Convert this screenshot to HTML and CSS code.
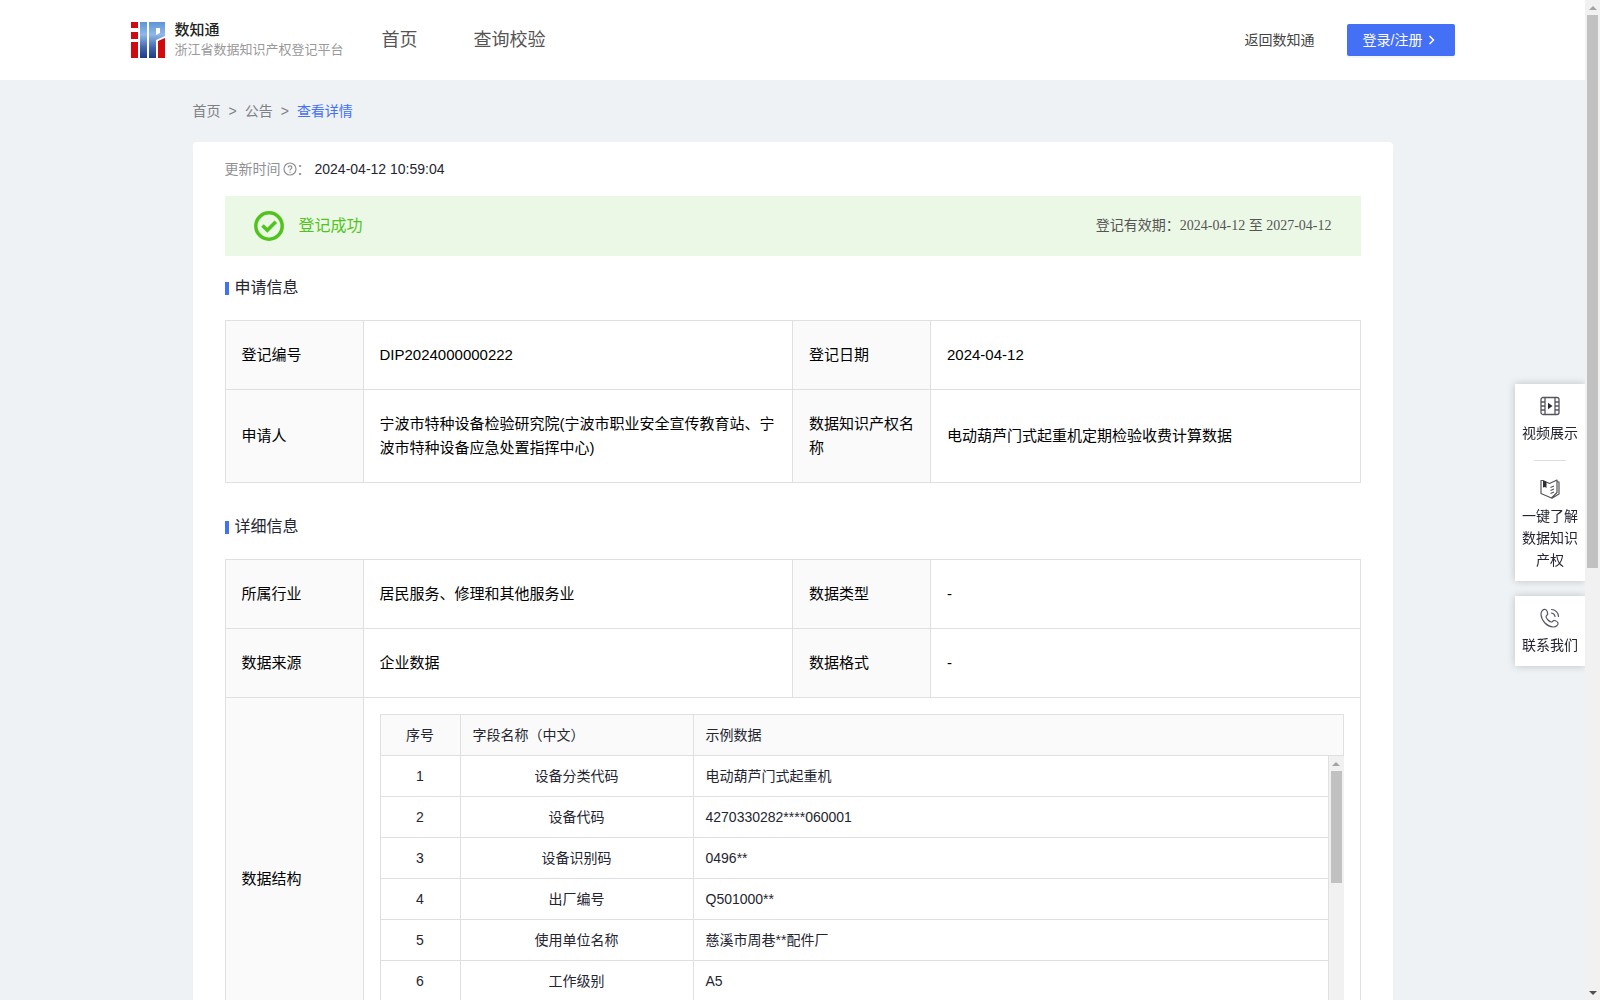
FILE: index.html
```html
<!DOCTYPE html>
<html lang="zh-CN">
<head>
<meta charset="utf-8">
<meta name="viewport" content="width=device-width, initial-scale=1">
<title>查看详情 - 浙江省数据知识产权登记平台</title>
<link rel="stylesheet" href="styles.css">
</head>
<body>
<div class="viewport">
<header class="header">
  <div class="header-inner">
    <a class="brand" href="#">
      <svg class="brand-logo" viewBox="0 0 34 36" aria-hidden="true">
        <defs>
          <linearGradient id="blue" x1="0" y1="0" x2="0" y2="36" gradientUnits="userSpaceOnUse">
            <stop offset="0" stop-color="#5d94d6"/>
            <stop offset="0.35" stop-color="#8fb8e8"/>
            <stop offset="0.7" stop-color="#4468b0"/>
            <stop offset="1" stop-color="#1f3a86"/>
          </linearGradient>
        </defs>
        <path fill="#cf0a10" d="M0 0h7v6H0zM0 10h7v7H0zM0 20h7v16H0zM27 19l7-3v20h-7z"/>
        <path fill="url(#blue)" d="M9 0h7v36H9zM18 0h16v14l-9 4v18h-7zM25 6v7l4-2V6z" fill-rule="evenodd"/>
      </svg>
      <span class="brand-text">
        <strong class="brand-name">数知通</strong>
        <span class="brand-sub">浙江省数据知识产权登记平台</span>
      </span>
    </a>
    <nav class="nav">
      <a href="#">首页</a>
      <a href="#">查询校验</a>
    </nav>
    <div class="header-actions">
      <a class="back-link" href="#">返回数知通</a>
      <button class="login" type="button">登录/注册<svg viewBox="0 0 14 14" aria-hidden="true"><path d="M4.500 3l4 4-4 4" fill="none" stroke="currentColor" stroke-width="1.5"/></svg></button>
    </div>
  </div>
</header>

<main class="page">
  <nav class="breadcrumb" aria-label="breadcrumb">
    <a href="#">首页</a><span>&gt;</span><a href="#">公告</a><span>&gt;</span><a class="current" href="#">查看详情</a>
  </nav>

  <section class="card">
    <div class="updated">
      <span class="updated-label">更新时间</span>
      <svg class="help" viewBox="0 0 14 14" aria-hidden="true"><g fill="none" stroke="#909094" stroke-width="1.2"><circle cx="7" cy="7" r="6"/><path d="M5.2 5.6c0-2.2 3.6-2.2 3.6 0C8.8 6.900 7 6.900 7 8.400"/></g><circle cx="7" cy="10.200" r=".7" fill="#909094"/></svg>
      <span class="updated-label">：</span>
      <time>2024-04-12 10:59:04</time>
    </div>

    <div class="banner">
      <svg class="banner-icon" viewBox="0 0 30 30" aria-hidden="true"><g fill="none" stroke="#50c41c"><circle cx="15" cy="15" r="13.200" stroke-width="3.500"/><path d="M8.500 14.500l4.800 4.800 8.500-8.500" stroke-width="3.600"/></g></svg>
      <span class="banner-status">登记成功</span>
      <span class="banner-term">登记有效期：2024-04-12 至 2027-04-12</span>
    </div>

    <h2 class="section-title">申请信息</h2>
    <table class="info">
      <colgroup><col class="c-label"><col><col class="c-label"><col></colgroup>
      <tbody>
        <tr><th scope="row">登记编号</th><td>DIP2024000000222</td><th scope="row">登记日期</th><td>2024-04-12</td></tr>
        <tr><th scope="row">申请人</th><td>宁波市特种设备检验研究院(宁波市职业安全宣传教育站、宁波市特种设备应急处置指挥中心)</td><th scope="row">数据知识产权名称</th><td>电动葫芦门式起重机定期检验收费计算数据</td></tr>
      </tbody>
    </table>

    <h2 class="section-title">详细信息</h2>
    <table class="info">
      <colgroup><col class="c-label"><col><col class="c-label"><col></colgroup>
      <tbody>
        <tr><th scope="row">所属行业</th><td>居民服务、修理和其他服务业</td><th scope="row">数据类型</th><td>-</td></tr>
        <tr><th scope="row">数据来源</th><td>企业数据</td><th scope="row">数据格式</th><td>-</td></tr>
        <tr>
          <th scope="row">数据结构</th>
          <td class="nest" colspan="3">
            <table class="fields fields-head">
              <colgroup><col class="c-no"><col class="c-name"><col></colgroup>
              <thead><tr><th scope="col">序号</th><th scope="col">字段名称（中文）</th><th scope="col">示例数据</th></tr></thead>
            </table>
            <div class="fields-scroll">
              <table class="fields">
                <colgroup><col class="c-no"><col class="c-name"><col></colgroup>
                <tbody>
                  <tr><td>1</td><td>设备分类代码</td><td>电动葫芦门式起重机</td></tr>
                  <tr><td>2</td><td>设备代码</td><td>4270330282****060001</td></tr>
                  <tr><td>3</td><td>设备识别码</td><td>0496**</td></tr>
                  <tr><td>4</td><td>出厂编号</td><td>Q501000**</td></tr>
                  <tr><td>5</td><td>使用单位名称</td><td>慈溪市周巷**配件厂</td></tr>
                  <tr><td>6</td><td>工作级别</td><td>A5</td></tr>
                  <tr><td></td><td></td><td></td></tr>
                </tbody>
              </table>
              <div class="scrollbar" aria-hidden="true">
                <span class="arrow arrow-up"></span>
                <span class="track"><span class="thumb thumb-fields"></span></span>
                <span class="arrow arrow-down"></span>
              </div>
            </div>
          </td>
        </tr>
      </tbody>
    </table>
  </section>
</main>
</div>

<aside class="side">
  <div class="side-group">
    <a class="side-item" href="#">
      <svg viewBox="0 0 20 20" aria-hidden="true"><g fill="none" stroke="#55555e" stroke-width="1.300"><rect x="1" y="1.500" width="18" height="17" rx="2"/><path d="M5 1.500v17M15 1.500v17M1 6h4M1 10h4M1 14h4M15 6h4M15 10h4M15 14h4"/></g><path d="M8 6.800v6.400l4.500-3.200z" fill="#2c2c36"/></svg>
      <span>视频展示</span>
    </a>
    <hr class="side-rule">
    <a class="side-item" href="#">
      <svg viewBox="0 0 20 20" aria-hidden="true"><g fill="none" stroke="#55555e" stroke-width="1.200" stroke-linejoin="round"><path d="M3 1.500L9.500 4.500 17 1v12.500l-5.500 5.500L1 14.500v-13h2M17 2.500l2 .5v12l-7.500 4.500M10.500 8.500L14 7M10.500 11.500L14 10M10.500 14.500L14 13"/></g><path d="M3 1.500l3.500 1.500v6L5 8l-2 .5z" fill="#2c2c36"/></svg>
      <span>一键了解数据知识产权</span>
    </a>
  </div>
  <div class="side-group">
    <a class="side-item" href="#">
      <svg viewBox="0 0 20 20" aria-hidden="true"><g fill="none" stroke="#55555e" stroke-width="1.200" stroke-linejoin="round" stroke-linecap="round"><path d="M5.500 1.500C3 .8.8 3.500 1 6.500 1.500 13 7 18.500 13 19c3 .2 5.500-2 5-4-.2-1-2.500-2.300-3.500-2.500-1.500-.3-2 1.500-3 1.500-2 0-5.500-3.500-5.500-5.500 0-1 2-1.500 1.700-3C7.500 4.300 6.500 1.800 5.500 1.500z"/><path d="M11.500 5a4 4 0 0 1 3.500 3.500M11.500 1.500a7 7 0 0 1 7 7"/></g></svg>
      <span>联系我们</span>
    </a>
  </div>
</aside>

<div class="scrollbar page-scrollbar" aria-hidden="true">
  <span class="arrow arrow-up"></span>
  <span class="track"><span class="thumb thumb-page"></span></span>
  <span class="arrow arrow-down arrow-active"></span>
</div>
</body>
</html>
```

FILE: styles.css
```css
* {
  box-sizing: border-box;
}

body {
  display: flex;
  height: 100vh;
  margin: 0;
  overflow: hidden;
  background: #eef2f5;
  color: #252531;
  font: 14px/22px "Liberation Sans", "Noto Sans CJK SC", sans-serif;
}

.viewport {
  flex: 1;
  min-width: 0;
  overflow-y: auto;
}

a {
  color: inherit;
  text-decoration: none;
}

svg {
  display: block;
  flex: none;
}

/* Scrollbars */
.scrollbar {
  display: flex;
  flex: none;
  flex-direction: column;
  width: 15px;
  background: #f1f1f1;
}

.page-scrollbar {
  z-index: 2;
}

.track {
  flex: 1;
  padding: 0 2px;
}

.thumb {
  display: block;
  background: #c1c1c1;
}

.thumb-page {
  height: 57%;
}

.thumb-fields {
  height: 112px;
}

.arrow {
  display: flex;
  align-items: center;
  justify-content: center;
  height: 15px;
  color: #a3a3a3;
}

.arrow::before {
  border: 4px solid transparent;
  content: "";
}

.arrow-up::before {
  border-top: 0;
  border-bottom-color: currentColor;
}

.arrow-down::before {
  border-bottom: 0;
  border-top-color: currentColor;
}

.arrow-active {
  color: #505050;
}

/* Header */
.header {
  background: #fff;
}

.header-inner {
  display: flex;
  align-items: center;
  max-width: 1324px;
  height: 80px;
  margin: 0 auto;
}

.brand {
  display: flex;
  align-items: center;
  gap: 10px;
}

.brand-logo {
  width: 34px;
  height: 36px;
}

.brand-text {
  display: flex;
  flex-direction: column;
}

.brand-name {
  color: #222;
  font-size: 15px;
  font-weight: 500;
  line-height: 20px;
}

.brand-sub {
  color: #999;
  font-size: 13px;
  line-height: 20px;
}

.nav {
  display: flex;
  gap: 56px;
  margin-left: 38px;
  color: #555;
  font-size: 18px;
}

.header-actions {
  display: flex;
  align-items: center;
  gap: 32px;
  margin-left: auto;
}

.back-link {
  color: #444;
}

.login {
  display: flex;
  align-items: center;
  gap: 2px;
  height: 32px;
  padding: 0 16px;
  border: 0;
  border-radius: 2px;
  background: #4370f5;
  box-shadow: 0 2px 0 rgba(0, 0, 0, 0.04);
  color: #fff;
  font: inherit;
}

.login svg {
  width: 14px;
  height: 14px;
}

/* Page */
.page {
  max-width: 1200px;
  margin: 0 auto;
  padding: 20px 0 80px;
}

.breadcrumb {
  display: flex;
  gap: 8px;
  margin-bottom: 20px;
  color: #808084;
}

.breadcrumb .current {
  color: #4370f5;
}

.card {
  padding: 16px 32px;
  border-radius: 4px;
  background: #fff;
}

.updated {
  display: flex;
  align-items: center;
  margin-bottom: 16px;
}

.updated-label {
  color: #909094;
}

.help {
  width: 14px;
  height: 14px;
  margin-left: 2px;
}

.updated time {
  margin-left: 4px;
}

.banner {
  display: flex;
  align-items: center;
  height: 60px;
  padding: 0 29px;
  background: #ecf8e6;
}

.banner-icon {
  width: 30px;
  height: 30px;
}

.banner-status {
  margin-left: 15px;
  color: #50c41c;
  font-size: 16px;
}

.banner-term {
  margin-left: auto;
  color: #555;
  font-family: "Liberation Serif", "Noto Sans CJK SC", serif;
}

.section-title {
  display: flex;
  align-items: center;
  gap: 6px;
  margin: 20px 0;
  font-size: 16px;
  font-weight: 400;
  line-height: 24px;
}

.section-title::before {
  width: 4px;
  height: 13px;
  background: #4370f5;
  content: "";
}

.info + .section-title {
  margin-top: 32px;
}

/* Information tables */
.info {
  width: 100%;
  border-collapse: collapse;
  table-layout: fixed;
  color: #000;
  font-size: 15px;
  line-height: 24px;
}

.c-label {
  width: 138px;
}

.info th,
.info td {
  padding: 22px 16px;
  border: 1px solid #e0e0e0;
  font-weight: 400;
  text-align: left;
}

.info th {
  background: #fafafa;
}

.info .nest {
  padding: 16px;
}

.info .fields {
  width: 100%;
  border-collapse: separate;
  border-spacing: 0;
  table-layout: fixed;
  border-left: 1px solid #e0e0e0;
  color: #252531;
  font-size: 14px;
  line-height: 24px;
}

.info .fields-head {
  border-top: 1px solid #e0e0e0;
}

.c-no {
  width: 80px;
}

.c-name {
  width: 233px;
}

.info .fields th,
.info .fields td {
  height: 41px;
  padding: 8px 12px;
  border-width: 0 1px 1px 0;
}

.info .fields th:first-child,
.info .fields td:first-child,
.info .fields td:nth-child(2) {
  text-align: center;
}

.fields-scroll {
  display: flex;
}

/* Floating shortcuts */
.side {
  position: fixed;
  top: 384px;
  right: 15px;
  z-index: 1;
  display: flex;
  flex-direction: column;
  gap: 15px;
  width: 70px;
}

.side-group {
  padding: 12px 7px 10px;
  background: #fff;
  box-shadow: 0 0 8px rgba(0, 0, 0, 0.2);
}

.side-item {
  display: flex;
  flex-direction: column;
  align-items: center;
  gap: 6px;
  text-align: center;
}

.side-item svg {
  width: 20px;
  height: 20px;
}

.side-rule {
  width: 32px;
  height: 1px;
  margin: 16px auto 18px;
  border: 0;
  background: #ddd;
}
```
